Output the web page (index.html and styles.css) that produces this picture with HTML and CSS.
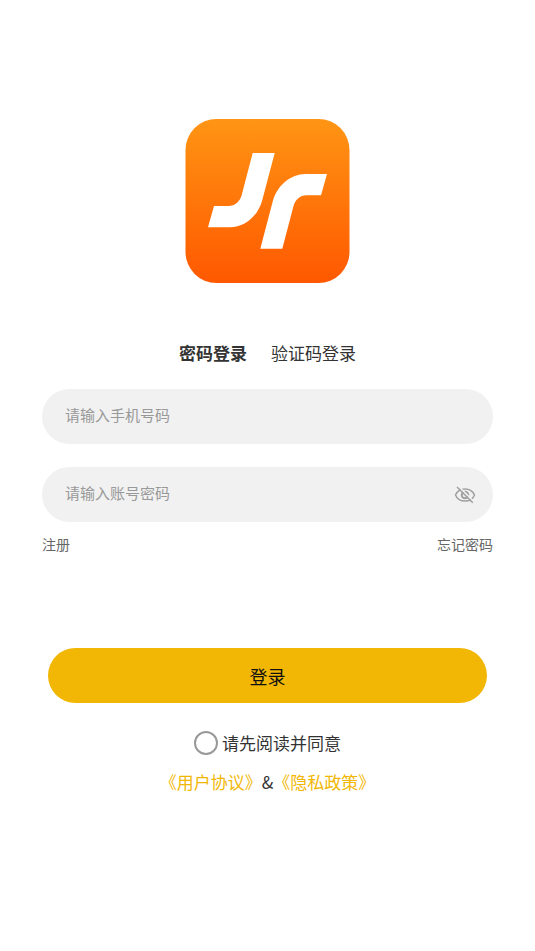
FILE: index.html
```html
<!DOCTYPE html>
<html lang="zh-CN">
<head>
<meta charset="utf-8">
<meta name="viewport" content="width=device-width, initial-scale=1">
<title>登录</title>
<link rel="stylesheet" href="styles.css">
</head>
<body>
<main class="page">
  <svg class="logo" viewBox="0 0 165 165" role="img" aria-label="Jr">
    <defs>
      <linearGradient id="tile" x1="0" y1="0" x2="0" y2="1">
        <stop offset="0" stop-color="#ff9514"/>
        <stop offset="1" stop-color="#ff5800"/>
      </linearGradient>
    </defs>
    <rect x="0.5" y="0" width="164" height="164" rx="31" fill="url(#tile)"/>
    <g fill="#fff">
      <path d="M67.7 34H89.7L77.3 81C73 97 60 108.3 45 108.3H23L29 87H43.3C50 87 55 82.5 56.7 76Z"/>
      <path d="M120.7 55H142L136 76.3H121.7C115 76.3 110 81 108.3 87.7L97.3 129.7H75.3L87.7 82.5C92 66.5 105.5 55 120.7 55Z"/>
    </g>
  </svg>

  <nav class="tabs">
    <button class="tab tab-active" type="button">密码登录</button>
    <button class="tab" type="button">验证码登录</button>
  </nav>

  <form class="form">
    <div class="field">
      <input class="input" type="tel" placeholder="请输入手机号码" aria-label="手机号码">
    </div>
    <div class="field">
      <input class="input" type="password" placeholder="请输入账号密码" aria-label="账号密码">
      <button class="eye" type="button" aria-label="显示密码">
        <svg viewBox="0 0 22 18" fill="none" stroke="#a0a0a0" stroke-width="1.5">
          <path d="M1.500 9C3 5.200 6.600 2.900 11 2.900S19 5.200 20.500 9C19 12.800 15.400 15.100 11 15.100S3 12.800 1.500 9Z"/>
          <circle cx="11" cy="9" r="3.300" stroke-width="2"/>
          <path d="M4.200 0L20.200 16" stroke="#f1f1f1" stroke-width="1.600"/>
          <path d="M3 1L18.800 16.800"/>
        </svg>
      </button>
    </div>
    <div class="links">
      <a href="#register">注册</a>
      <a href="#forgot">忘记密码</a>
    </div>
    <button class="submit" type="submit">登录</button>
    <label class="agree">
      <input class="check" type="checkbox">
      <span>请先阅读并同意</span>
    </label>
    <p class="terms"><a href="#terms">《用户协议》</a>&amp;<a href="#privacy">《隐私政策》</a></p>
  </form>
</main>
</body>
</html>
```
FILE: styles.css
```css
* {
  box-sizing: border-box;
}

body {
  margin: 0;
  background: #fff;
  color: #333;
  font-family: "Noto Sans CJK SC", sans-serif;
  font-size: 17px;
  line-height: 24px;
}

button,
input {
  margin: 0;
  padding: 0;
  border: 0;
  background: none;
  color: inherit;
  font: inherit;
}

button {
  cursor: pointer;
}

a {
  color: inherit;
  text-decoration: none;
}

.page {
  display: flex;
  flex-direction: column;
  align-items: center;
  padding: 119px 42px 40px;
}

.logo {
  display: block;
  width: 165px;
  height: 165px;
}

.tabs {
  display: flex;
  gap: 24px;
  margin-top: 57px;
}

.tab-active {
  font-weight: 700;
}

.form {
  display: flex;
  flex-direction: column;
  width: 100%;
  margin-top: 24px;
}

.field {
  display: flex;
  align-items: center;
  height: 55px;
  margin-bottom: 23px;
  padding: 0 17px 0 23px;
  border-radius: 28px;
  background: #f1f1f1;
}

.input {
  flex: 1;
  min-width: 0;
  height: 100%;
  padding-bottom: 4px;
  outline: none;
  font-size: 15px;
}

.input::placeholder {
  color: #999;
  opacity: 1;
}

.eye svg {
  display: block;
  width: 22px;
  height: 18px;
}

.links {
  display: flex;
  justify-content: space-between;
  margin-top: -13px;
  color: #666;
  font-size: 14px;
}

.submit {
  height: 55px;
  margin: 92px 6px 0;
  border-radius: 28px;
  background: #f2b705;
  color: #111;
  font-size: 18px;
}

.agree {
  display: flex;
  align-items: center;
  align-self: center;
  gap: 4px;
  margin-top: 28px;
}

.check {
  width: 24px;
  height: 24px;
  border: 2px solid #999;
  border-radius: 50%;
  appearance: none;
}

.check:checked {
  border-color: #f2b705;
  background: #f2b705;
}

.terms {
  margin: 15px 0 0;
  text-align: center;
}

.terms a {
  color: #f2b705;
}
```
